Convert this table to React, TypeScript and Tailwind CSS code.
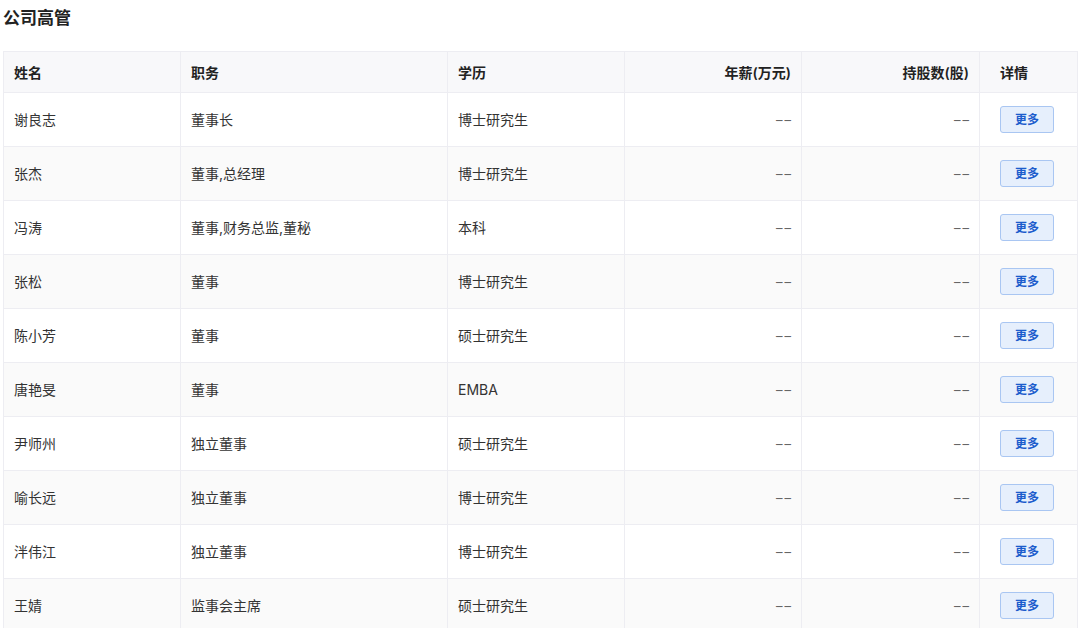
const rows = [
  { name: '谢良志', title: '董事长', edu: '博士研究生' },
  { name: '张杰', title: '董事,总经理', edu: '博士研究生' },
  { name: '冯涛', title: '董事,财务总监,董秘', edu: '本科' },
  { name: '张松', title: '董事', edu: '博士研究生' },
  { name: '陈小芳', title: '董事', edu: '硕士研究生' },
  { name: '唐艳旻', title: '董事', edu: 'EMBA' },
  { name: '尹师州', title: '独立董事', edu: '硕士研究生' },
  { name: '喻长远', title: '独立董事', edu: '博士研究生' },
  { name: '泮伟江', title: '独立董事', edu: '博士研究生' },
  { name: '王婧', title: '监事会主席', edu: '硕士研究生' },
];

function Dash() {
  return <span className="mr-[-2px] tracking-[2px] text-[13px] text-[#666]">––</span>;
}

function App() {
  return (
    <div
      className="h-[628px] overflow-hidden bg-white px-[3px] pt-[6px] text-[#333]"
      style={{ fontFamily: 'Inter, "Noto Sans CJK SC", sans-serif' }}
    >
      <h1 className="text-[17px] leading-6 font-bold text-[#222]">公司高管</h1>
      <table className="mt-[21px] w-[1074px] table-fixed border-collapse text-[14px]">
        <colgroup>
          <col className="w-[177px]" />
          <col className="w-[267px]" />
          <col className="w-[177px]" />
          <col className="w-[177px]" />
          <col className="w-[178px]" />
          <col className="w-[98px]" />
        </colgroup>
        <thead>
          <tr className="h-[41px] bg-[#f8f8fa] font-semibold text-[#222]">
            <th className="border border-[#ededf2] px-[10px] text-left font-semibold">姓名</th>
            <th className="border border-[#ededf2] px-[10px] text-left font-semibold">职务</th>
            <th className="border border-[#ededf2] px-[10px] text-left font-semibold">学历</th>
            <th className="border border-[#ededf2] px-[10px] text-right font-semibold">年薪(万元)</th>
            <th className="border border-[#ededf2] px-[10px] text-right font-semibold">持股数(股)</th>
            <th className="border border-[#ededf2] pl-[20px] text-left font-semibold">详情</th>
          </tr>
        </thead>
        <tbody>
          {rows.map((r, i) => (
            <tr key={r.name} className={`h-[54px] ${i % 2 === 1 ? 'bg-[#fafafa]' : 'bg-white'}`}>
              <td className="border border-[#ededf2] px-[10px]">{r.name}</td>
              <td className="border border-[#ededf2] px-[10px]">{r.title}</td>
              <td className="border border-[#ededf2] px-[10px]">{r.edu}</td>
              <td className="border border-[#ededf2] px-[10px] text-right">
                <Dash />
              </td>
              <td className="border border-[#ededf2] px-[10px] text-right">
                <Dash />
              </td>
              <td className="border border-[#ededf2] pl-[20px] text-left">
                <button className="h-[27px] w-[54px] rounded-[3px] border border-[#a9c6f2] bg-[#e6effc] text-[12px] font-bold text-[#1c5ccc]">
                  更多
                </button>
              </td>
            </tr>
          ))}
        </tbody>
      </table>
    </div>
  );
}

export default App;
